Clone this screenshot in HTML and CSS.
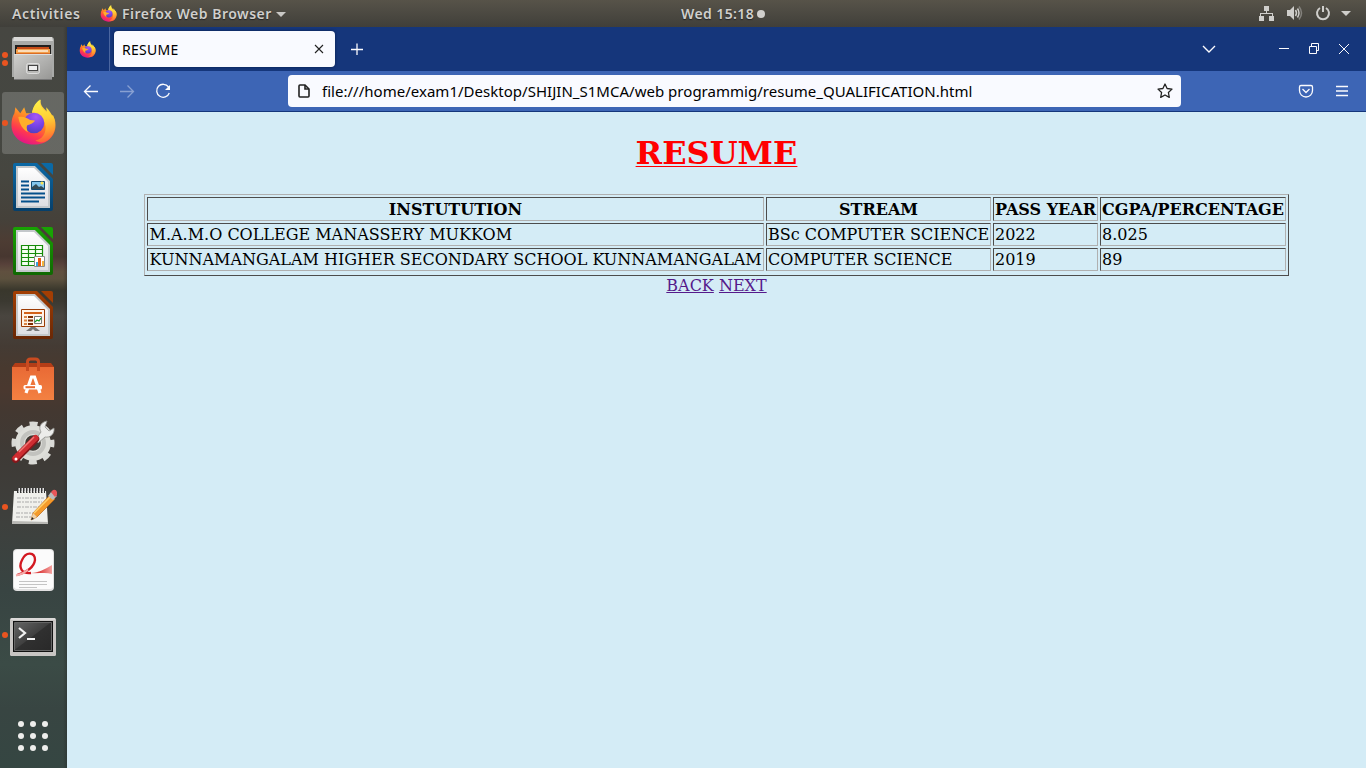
FILE: index.html
```html
<!DOCTYPE html>
<html lang="en">
<head>
<meta charset="utf-8">
<title>RESUME</title>
<link rel="stylesheet" href="styles.css">
</head>
<body>
<svg class="defs" width="0" height="0">
  <defs>
    <linearGradient id="fxBody" x1=".8" y1="0" x2=".35" y2="1"><stop offset="0" stop-color="#fff44f"/><stop offset=".3" stop-color="#ffb52c"/><stop offset=".55" stop-color="#ff7a26"/><stop offset=".78" stop-color="#ff3850"/><stop offset="1" stop-color="#e31587"/></linearGradient>
    <linearGradient id="fxFlame" x1=".4" y1="0" x2=".5" y2="1"><stop offset="0" stop-color="#fff14a"/><stop offset=".45" stop-color="#ffd035"/><stop offset=".75" stop-color="#ff9a2e"/><stop offset="1" stop-color="#ff5f3a"/></linearGradient>
    <radialGradient id="fxGlobe" cx=".6" cy=".2" r=".8"><stop offset="0" stop-color="#a558f5"/><stop offset=".6" stop-color="#7542e5"/><stop offset="1" stop-color="#5340c0"/></radialGradient>
    <linearGradient id="metal" x1="0" y1="0" x2="1" y2="1"><stop offset="0" stop-color="#d0d0ce"/><stop offset="1" stop-color="#969694"/></linearGradient>
    <linearGradient id="paper" x1="0" y1="0" x2="0" y2="1"><stop offset="0" stop-color="#fff"/><stop offset="1" stop-color="#dedee2"/></linearGradient>
    <linearGradient id="bag" x1="0" y1="0" x2="0" y2="1"><stop offset="0" stop-color="#e96a35"/><stop offset="1" stop-color="#f38142"/></linearGradient>
    <linearGradient id="screen" x1="0" y1="0" x2="1" y2="1"><stop offset="0" stop-color="#646464"/><stop offset=".48" stop-color="#404040"/><stop offset=".5" stop-color="#303030"/><stop offset="1" stop-color="#292929"/></linearGradient>
    <linearGradient id="ribbon" x1="0" y1="0" x2="1" y2="0"><stop offset="0" stop-color="#f7b9b7"/><stop offset=".4" stop-color="#dc3838"/><stop offset="1" stop-color="#f4a3a0"/></linearGradient>
    <linearGradient id="blueEdge" x1="0" y1="0" x2="0" y2="1"><stop offset="0" stop-color="#0b69a6"/><stop offset="1" stop-color="#063f6a"/></linearGradient>
    <linearGradient id="greenEdge" x1="0" y1="0" x2="0" y2="1"><stop offset="0" stop-color="#18a303"/><stop offset="1" stop-color="#106802"/></linearGradient>
    <linearGradient id="brownEdge" x1="0" y1="0" x2="0" y2="1"><stop offset="0" stop-color="#a33e03"/><stop offset="1" stop-color="#692705"/></linearGradient>
    <symbol id="firefox" viewBox="0 0 48 48">
      <path fill="url(#fxBody)" d="M5 15 6 9l5 6 4-6 2 6 6 0c1-6 5-11 9-14-1 6 2 8 7 13l5 3c2 3 3 6 3 10 0 12-9 20-22 20S2 39 2 27c0-5 1-9 3-12Z"/>
      <path fill="url(#fxFlame)" d="M23 14c1-6 4-10 8-13-1 6 2 9 7 13l-.5-5c3 3 5 6 6 9l1-1c4 9 2 20-6 26-4 3-9 2-12 0 10-2 13-13 8-21-3-5-7-7-12-8Z"/>
      <circle cx="25" cy="25" r="10.500" fill="url(#fxGlobe)"/>
      <path fill="#ffae2b" d="M9 19c5-1 9 1 12 3l5 .5c-1 3-6 4-8 5-1 2 0 5 1 7-6-3-9-9-10-15.500Z"/>
    </symbol>
  </defs>
</svg>
<div class="desktop">
  <header class="topbar">
    <span class="activities">Activities</span>
    <svg class="app-icon" width="17" height="17"><use href="#firefox"/></svg>
    <span class="app-name">Firefox Web Browser</span>
    <svg class="app-arrow" width="10" height="5"><path d="M0 0h10L5 5Z" fill="#c9c8c5"/></svg>
    <span class="clock">Wed 15:18</span><i class="notice"></i>
    <svg class="status" width="108" height="27" fill="#cfcecb">
      <path d="M6 6h5v5H9v2h6v3h1v5h-5v-5h3v-2H3v2h3v5H1v-5h1v-3h6v-2H6Z"/>
      <path d="M29 10h3l4-4v14l-4-4h-3Z"/><path d="M37.500 10q2 3 0 6M39.500 8.500q3 4.500 0 9" fill="none" stroke="#cfcecb" stroke-width="1.500"/><path d="M41 6.500q5 6.500 0 13" fill="none" stroke="#83817c" stroke-width="1.500"/>
      <path d="M62 8a6 6 0 1 0 6 0M65 6v6" fill="none" stroke="#cfcecb" stroke-width="2"/>
      <path d="M83 11h10l-5 5Z"/>
    </svg>
  </header>
  <div class="workspace">
    <nav class="dock">
      <svg class="slot" width="67" height="64">
        <circle cx="5" cy="28" r="3" fill="#e95420"/><circle cx="5" cy="36" r="3" fill="#e95420"/>
        <path d="M12 13q0-3 3-3h36q3 0 3 3v37H12Z" fill="#a9aaa8"/><path d="M14 10h38l1 4H13Z" fill="#dadad8"/>
        <path d="M15 18h36v12H15Z" fill="#22201e"/><path d="M17 20h32v5H17Z" fill="#c64b17"/><path d="M16 22h34v8H16Z" fill="#f2a04d"/><path d="M18 24h30" stroke="#fff1dc" stroke-width="1.500"/><path d="M16 26h34v2H16Z" fill="#db6d24"/>
        <path d="M14 27h38v26H14Z" fill="url(#metal)"/><path d="M14 27.500h38" stroke="#ddd"/><path d="M14 52.500h38" stroke="#777"/>
        <rect x="26.500" y="36.500" width="13" height="10" rx="2" fill="#b9b9b7" stroke="#dedede"/><rect x="28.500" y="38.500" width="9" height="5" fill="#eee" stroke="#444"/>
      </svg>
      <svg class="slot" width="67" height="64"><rect x="2" y="1" width="62" height="62" rx="3" fill="#fff" opacity=".18"/><circle cx="5" cy="32" r="3" fill="#e95420"/><use href="#firefox" x="9.500" y="7.500" width="47" height="47"/></svg>
      <svg class="slot" width="67" height="64">
        <path d="M15 8h22l16 16v30q0 2-2 2H15q-2 0-2-2V10q0-2 2-2Z" fill="url(#blueEdge)"/><path d="M41 8h10q2 0 2 2v10Z" fill="#0b69a6"/>
        <path d="M17 12h17.500L49 26.500V52H17Z" fill="url(#paper)" stroke="#c4c8cb" stroke-width="2"/>
        <path d="M21 26.500h8M21 30.500h8M21 34.500h8M21 38.500h24M21 42.500h24M21 46.500h18" stroke="#05508b" stroke-width="2"/>
        <path d="M31.500 26.500h13v8h-13Z" fill="#83c6ed" stroke="#124b74"/><circle cx="42" cy="28" r="1.500" fill="#ffe34e"/><path d="M32 34v-2l4-3 3 3 2-1 3 2v1Z" fill="#344b56"/>
      </svg>
      <svg class="slot" width="67" height="64">
        <path d="M15 8h22l16 16v30q0 2-2 2H15q-2 0-2-2V10q0-2 2-2Z" fill="url(#greenEdge)"/><path d="M41 8h10q2 0 2 2v10Z" fill="#18a303"/>
        <path d="M17 12h17.500L49 26.500V52H17Z" fill="url(#paper)" stroke="#c4c8cb" stroke-width="2"/>
        <path d="M21.500 26.500h21v20h-21ZM28.500 26v20M35.500 26v20M21 30.500h22M21 34.500h22M21 38.500h22M21 42.500h22" fill="#f5fff2" stroke="#158b08" stroke-width="1.200"/>
        <path d="M34.500 37.500h10v10h-10Z" fill="#fff" stroke="#888"/><path d="M36 43h2v4h-2Z" fill="#39a4dc"/><path d="M38 39h3v8h-3Z" fill="#e65a14"/><path d="M42 42h2v5h-2Z" fill="#f4b43d"/>
      </svg>
      <svg class="slot" width="67" height="64">
        <path d="M15 8h22l16 16v30q0 2-2 2H15q-2 0-2-2V10q0-2 2-2Z" fill="url(#brownEdge)"/><path d="M41 8h10q2 0 2 2v10Z" fill="#a33e03"/>
        <path d="M17 12h17.500L49 26.500V52H17Z" fill="url(#paper)" stroke="#c4c8cb" stroke-width="2"/>
        <path d="M21.500 26.500h23v17h-23Z" fill="#fff3e8" stroke="#9b3b05"/><path d="M24 30h18" stroke="#d36118" stroke-width="2"/><path d="M24 34h3M24 37.500h3M24 41h3" stroke="#d98345" stroke-width="2"/><path d="M28 34h5M28 37.500h5M28 41h5" stroke="#7c2b00" stroke-width="2"/>
        <path d="M34.500 33.500h7v7h-7Z" fill="#fff" stroke="#777"/><path d="m35 39 2-2 2 1 2-3" fill="none" stroke="#159b22" stroke-width="1.300"/><path d="M31 44h4l5 4h-5l-2-2-2 2h-5Z" fill="#777"/>
      </svg>
      <svg class="slot" width="67" height="64">
        <path d="m12 20 3-4h36l3 4Z" fill="#b33d17"/><path d="M27.500 25V15q0-3 3-3h5q3 0 3 3v10" fill="none" stroke="#c94b20" stroke-width="3"/>
        <path d="M12 20h42v33H12Z" fill="url(#bag)"/><path d="M27.500 19v5M38.500 19v5" stroke="#c94b20" stroke-width="3"/>
        <path d="m26 46 5.500-16h3L40 46" fill="none" stroke="#fff" stroke-width="3.200"/><rect x="23.500" y="38" width="18.500" height="4.500" rx="1.500" fill="#fff"/><path d="M25.500 40.200h9.500" stroke="#ed6b32" stroke-width="2"/>
      </svg>
      <svg class="slot" width="67" height="64">
        <circle cx="33" cy="32" r="12.800" fill="none" stroke="#deded9" stroke-width="10"/><circle cx="33" cy="32" r="19" fill="none" stroke="#dadad6" stroke-width="5" stroke-dasharray="8 6.920" stroke-dashoffset="4"/><circle cx="33" cy="32" r="11" fill="none" stroke="#c2c2be" stroke-width="4"/>
        <path d="m36 28 5-7c-3-5 0-10 6-11l-2 6 4 4 5-3c1 6-4 10-9 9l-7 6Z" fill="#ececea" stroke="#8e8e8a" stroke-width=".8"/>
        <path d="m15.500 48 20-20" stroke="#85171b" stroke-width="7.500" stroke-linecap="round"/><path d="m15.500 47 20-20" stroke="#cf2d32" stroke-width="6" stroke-linecap="round"/><path d="m19 41 15-15" stroke="#f27976" stroke-width="1.500"/><circle cx="16" cy="48" r="1.500" fill="#fff"/>
      </svg>
      <svg class="slot" width="67" height="64">
        <circle cx="5" cy="32" r="3" fill="#e95420"/><path d="M14 16h32l2 33H12Z" fill="#f0f0ec"/><path d="m12 46 36 1v2H12Z" fill="#b8b8b4"/>
        <path d="M17 15.500h28" stroke="#333" stroke-width="5" stroke-dasharray="1.500 1.500"/><path d="M18.500 15h27" stroke="#e4e4e4" stroke-width="4" stroke-dasharray="1.500 1.500"/>
        <path d="M17 23h27M17 27h25M17 32h23M16 38h20M16 42h17" stroke="#aaa" stroke-dasharray="4 1 2 1"/>
        <path d="m31 45 2-7 17-18 5 4-18 18Z" fill="#f49a2b" stroke="#b96312" stroke-width=".7"/><path d="m34 38 17-17" stroke="#ffd06b" stroke-width="1.500"/><path d="m31 45 2-7 4 4Z" fill="#eed0a6"/><path d="m31 45 1-3 2 2Z" fill="#222"/><path d="m48 21 3-4 6 4-4 4Z" fill="#bbb"/><path d="m51 17 2-2q3-1 4 2v3l-2 2Z" fill="#e95659"/>
      </svg>
      <svg class="slot" width="67" height="64">
        <rect x="13" y="10" width="41" height="42" rx="4" fill="#e1e1e1"/><rect x="14" y="11" width="39" height="39" rx="3" fill="#fbfbfb"/>
        <path d="M30 34c9 0 15-4 22-8v9c-7-2-14 0-22-1Z" fill="url(#ribbon)"/><path d="M17 36c10-3 17-8 18-15 0-8-9-9-13 0-4 8 0 14 9 13" fill="none" stroke="#d31820" stroke-width="2.300"/><path d="M16 36.500c5-1 9-3 12-6" fill="none" stroke="#f5aaa8" stroke-width="2"/>
        <path d="M19 42.500h28M19 45.500h28M19 48.500h18" stroke="#c4c4c4"/>
      </svg>
      <svg class="slot" width="67" height="64">
        <circle cx="5" cy="32" r="3" fill="#e95420"/><rect x="10" y="15" width="46" height="38" rx="1.500" fill="#c8c5c3"/><path d="M11 16h44" stroke="#eee"/><path d="M13 18h40v31H13Z" fill="#111"/><path d="M14.500 19.500h37v28h-37Z" fill="url(#screen)" stroke="#666"/><path d="m19 25 6 5-6 5M27 36h8" fill="none" stroke="#f3f3f3" stroke-width="2.200"/>
      </svg>
      <svg class="apps" width="67" height="64" fill="#eeeeec"><g id="dots"><circle cx="21" cy="20" r="3"/><circle cx="33" cy="20" r="3"/><circle cx="45" cy="20" r="3"/></g><use href="#dots" y="12"/><use href="#dots" y="24"/></svg>
    </nav>
    <section class="browser">
      <div class="tabs">
        <div class="pinned"><svg width="17" height="17"><use href="#firefox"/></svg></div>
        <div class="tab"><span class="tab-title">RESUME</span><svg width="10" height="10"><path d="m1 1 8 8M9 1 1 9" stroke="#222" stroke-width="1.100"/></svg></div>
        <svg class="plus" width="12" height="12"><path d="M0 6.500h12M6 .5v12" stroke="#fbfbfe" stroke-width="1.300"/></svg>
        <svg class="window-buttons" width="166" height="44" fill="none" stroke="#fbfbfe"><path d="m3 19 6 6 6-6" stroke-width="1.400"/><path d="M79 21.500h10M109.500 19.500h7v7h-7ZM111.500 19v-2.500h7v7H116M139 17l10 10M149 17l-10 10"/></svg>
      </div>
      <div class="toolbar">
        <svg class="nav-buttons" width="221" height="40" fill="none" stroke="#fbfbfe" stroke-width="1.300"><path d="M31 20.500H17.500m6-6-6 6 6 6"/><path d="M53 20.500h13.500m-6-6 6 6-6 6" opacity=".4"/><path d="M101.500 16a6.500 6.500 0 1 0 .8 6"/><path d="M103 14v5h-5Z" fill="#fbfbfe" stroke="none"/></svg>
        <div class="address"><svg width="12" height="14" fill="none" stroke="#222" stroke-width="1.600"><path d="M2 1h5l4 4v7q0 1-1 1H2q-1 0-1-1V2q0-1 1-1Z"/><path d="M7 1v4h4"/></svg><span class="url">file:///home/exam1/Desktop/SHIJIN_S1MCA/web programmig/resume_QUALIFICATION.html</span><svg class="star" width="16" height="16"><path d="m8 1 2.100 4.500 4.900.6-3.600 3.400.9 4.900L8 12l-4.300 2.400.9-4.900L1 6.100l4.900-.6Z" fill="none" stroke="#222" stroke-width="1.300" stroke-linejoin="round"/></svg></div>
        <svg class="menu-buttons" width="60" height="40" fill="none" stroke="#fbfbfe" stroke-width="1.300"><path d="M8 14.500h10q1.500 0 1.500 1.500v3.500a6.500 6.500 0 0 1-13 0V16q0-1.500 1.500-1.500Z"/><path d="m9.500 18 3.500 3.500 3.500-3.500"/><path d="M43 15.500h12M43 20h12M43 24.500h12"/></svg>
      </div>
      <main class="page">
        <h1>RESUME</h1>
        <table>
          <colgroup><col class="institution"><col class="stream"><col class="year"><col class="grade"></colgroup>
          <tr class="head"><th>INSTUTUTION</th><th>STREAM</th><th>PASS YEAR</th><th>CGPA/PERCENTAGE</th></tr>
          <tr><td>M.A.M.O COLLEGE MANASSERY MUKKOM</td><td>BSc COMPUTER SCIENCE</td><td>2022</td><td>8.025</td></tr>
          <tr><td>KUNNAMANGALAM HIGHER SECONDARY SCHOOL KUNNAMANGALAM</td><td>COMPUTER SCIENCE</td><td>2019</td><td>89</td></tr>
        </table>
        <div class="links"><a href="#back">BACK</a> <a href="#next">NEXT</a></div>
      </main>
    </section>
  </div>
</div>
</body>
</html>
```
FILE: styles.css
```css
* { box-sizing: border-box; }
body { margin: 0; overflow: hidden; font-family: "Noto Sans", sans-serif; }
svg { display: block; flex: none; }
.defs { position: absolute; }
.desktop { width: 1366px; height: 768px; display: flex; flex-direction: column; }
.topbar { height: 27px; flex: none; display: flex; align-items: center; color: #d0cfcc; background: linear-gradient(#575349, #403f3a); font-size: 14px; line-height: 19px; font-weight: 600; white-space: nowrap; text-shadow: 0 1px 1px #222; }
.activities { width: 87px; padding-left: 12px; letter-spacing: .6px; }
.app-icon { margin-left: 13px; }
.app-name { width: 154px; margin-left: 5px; letter-spacing: .5px; }
.app-arrow { margin-top: 1px; }
.clock { width: 75px; margin-left: 395px; letter-spacing: .4px; }
.notice { width: 8px; height: 8px; border-radius: 50%; background: #d0cfcc; margin-left: 1px; }
.activities, .app-name, .clock { padding-bottom: 1px; }
.status { margin-left: auto; }
.workspace { display: flex; height: 741px; }
.dock { width: 67px; flex: none; display: flex; flex-direction: column; background: linear-gradient(90deg, #0000 94%, #2225), linear-gradient(#464641 0, #454741 13%, #464640 20%, #45413a 26%, #4d3c33 29%, #473730 31%, #57413a 32%, #60503f 33%, #5c513e 34%, #39372c 35.5%, #3b3931 37%, #49453f 39%, #443b34 43%, #48392f 46%, #4a382f 49%, #433831 52%, #3e3a36 58%, #3e403d 67%, #384442 76%, #3b4b46 86%, #384542 92%, #354642 100%); }
.apps { margin-top: 37px; }
.browser { flex: 1; display: flex; flex-direction: column; }
.tabs { height: 44px; background: #15367b; display: flex; align-items: center; }
.pinned { width: 43px; height: 44px; padding-left: 12px; display: flex; align-items: center; border-right: 1px solid #4b66a0; }
.tab { width: 221px; height: 36px; margin-left: 4px; padding: 0 11px 0 8px; display: flex; align-items: center; justify-content: space-between; background: #f9faff; color: #000; border-radius: 4px; box-shadow: 0 0 3px #071d4b; font-size: 14px; letter-spacing: .3px; }
.plus { margin-left: 16px; }
.window-buttons { margin-left: auto; }
.toolbar { height: 41px; display: flex; align-items: center; background: #3d65b5; border-bottom: 1px solid #15367b; }
.address { width: 893px; height: 32px; display: flex; align-items: center; padding: 0 8px 0 10px; border-radius: 4px; background: #f9faff; color: #000; }
.url { margin-left: 12px; font-size: 15px; letter-spacing: .02px; white-space: nowrap; }
.star { margin-left: auto; }
.menu-buttons { margin-left: auto; margin-right: 13px; }
.page { flex: 1; background: #d4ecf6; color: #000; font: 16px/19px "DejaVu Serif", serif; display: flex; flex-direction: column; align-items: center; }
h1 { margin: 21px 0; color: #f00; font-size: 32px; line-height: 40px; text-decoration: underline; text-decoration-thickness: 1px; text-decoration-skip-ink: none; text-underline-offset: 2px; }
table { width: 1145px; height: 82px; table-layout: fixed; border-spacing: 2px; border: 1px solid; border-color: #b0b0b0 #4c4c4c #4c4c4c #b0b0b0; padding: 0 0 2px; }
.institution { width: 617px; }
.stream { width: 225px; }
.year { width: 105px; }
.grade { width: 186px; }
tr { height: 23px; }
.head { height: 24px; }
th, td { padding: 1px; border: 1px solid; border-color: #4c4c4c #b0b0b0 #b0b0b0 #4c4c4c; white-space: nowrap; text-align: left; }
td:first-child { padding-left: 1.6px; }
th { text-align: center; }
.links { color: #551a8b; }
.links a { color: inherit; }
```
